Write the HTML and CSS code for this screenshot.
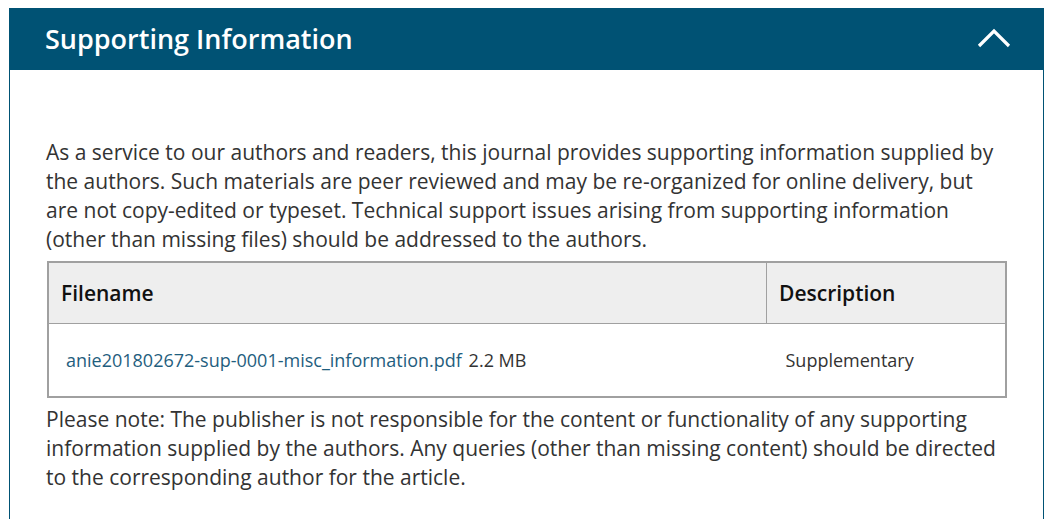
FILE: index.html
```html
<!DOCTYPE html>
<html lang="en">
<head>
<meta charset="utf-8">
<link rel="stylesheet" href="styles.css">
</head>
<body>
<section class="panel">
  <header class="panel-head">
    <h2 class="panel-title">Supporting Information</h2>
    <svg class="chevron" width="34" height="20" viewBox="0 0 34 20"><path d="M2 18 L17 3 L32 18" fill="none" stroke="#fff" stroke-width="3.2"/></svg>
  </header>
  <div class="panel-body">
    <p class="intro">As a service to our authors and readers, this journal provides supporting information supplied by the authors. Such materials are peer reviewed and may be re-organized for online delivery, but are not copy-edited or typeset. Technical support issues arising from supporting information (other than missing files) should be addressed to the authors.</p>
    <table class="files">
      <thead>
        <tr><th class="col-name">Filename</th><th class="col-desc">Description</th></tr>
      </thead>
      <tbody>
        <tr><td class="col-name"><a class="file-link" href="#">anie201802672-sup-0001-misc_information.pdf</a> <span class="size">2.2 MB</span></td><td class="col-desc desc">Supplementary</td></tr>
      </tbody>
    </table>
    <p class="note">Please note: The publisher is not responsible for the content or functionality of any supporting information supplied by the authors. Any queries (other than missing content) should be directed to the corresponding author for the article.</p>
  </div>
</section>
</body>
</html>
```
FILE: styles.css
```css
html, body { margin: 0; padding: 0; background: #fff; overflow: hidden; }
body { font-family: "Open Sans", "Liberation Sans", sans-serif; color: #333; }
.panel {
  margin: 8px 0 0 9px;
  width: 1035px;
  border-left: 1px solid #005274;
  border-right: 1px solid #005274;
  box-sizing: border-box;
  min-height: 520px;
}
.panel-head {
  background: #005274;
  height: 62px;
  margin: 0 -1px;
  display: flex;
  align-items: center;
  justify-content: space-between;
  padding: 0 33px 0 36px;
}
.panel-title {
  margin: 0;
  color: #fff;
  font-size: 27px;
  font-weight: 600;
  line-height: 1;
  padding-bottom: 1px;
}
.chevron { display: block; margin-bottom: 2px; }
.panel-body { padding: 68px 36px 0 36px; }
.intro, .note {
  margin: 0;
  font-size: 21px;
  line-height: 29px;
  color: #333;
}
.files {
  border-collapse: collapse;
  width: 960px;
  margin: 7px 0 7px 1px;
  border: 2px solid #a0a0a0;
}
.files th {
  background: #eee;
  text-align: left;
  font-weight: 600;
  font-size: 21px;
  color: #111;
  height: 60px;
  padding: 0 0 0 12px;
  border-bottom: 1px solid #a0a0a0;
}
.files th.col-name { border-right: 1px solid #a0a0a0; width: 705px; }
.files td {
  height: 72px;
  font-size: 18px;
  padding: 0 0 0 17px;
}
.file-link { color: #1f5e7e; text-decoration: none; }
.size { color: #333; margin-left: 2px; }
.desc { color: #333; padding-left: 19px !important; }
```
